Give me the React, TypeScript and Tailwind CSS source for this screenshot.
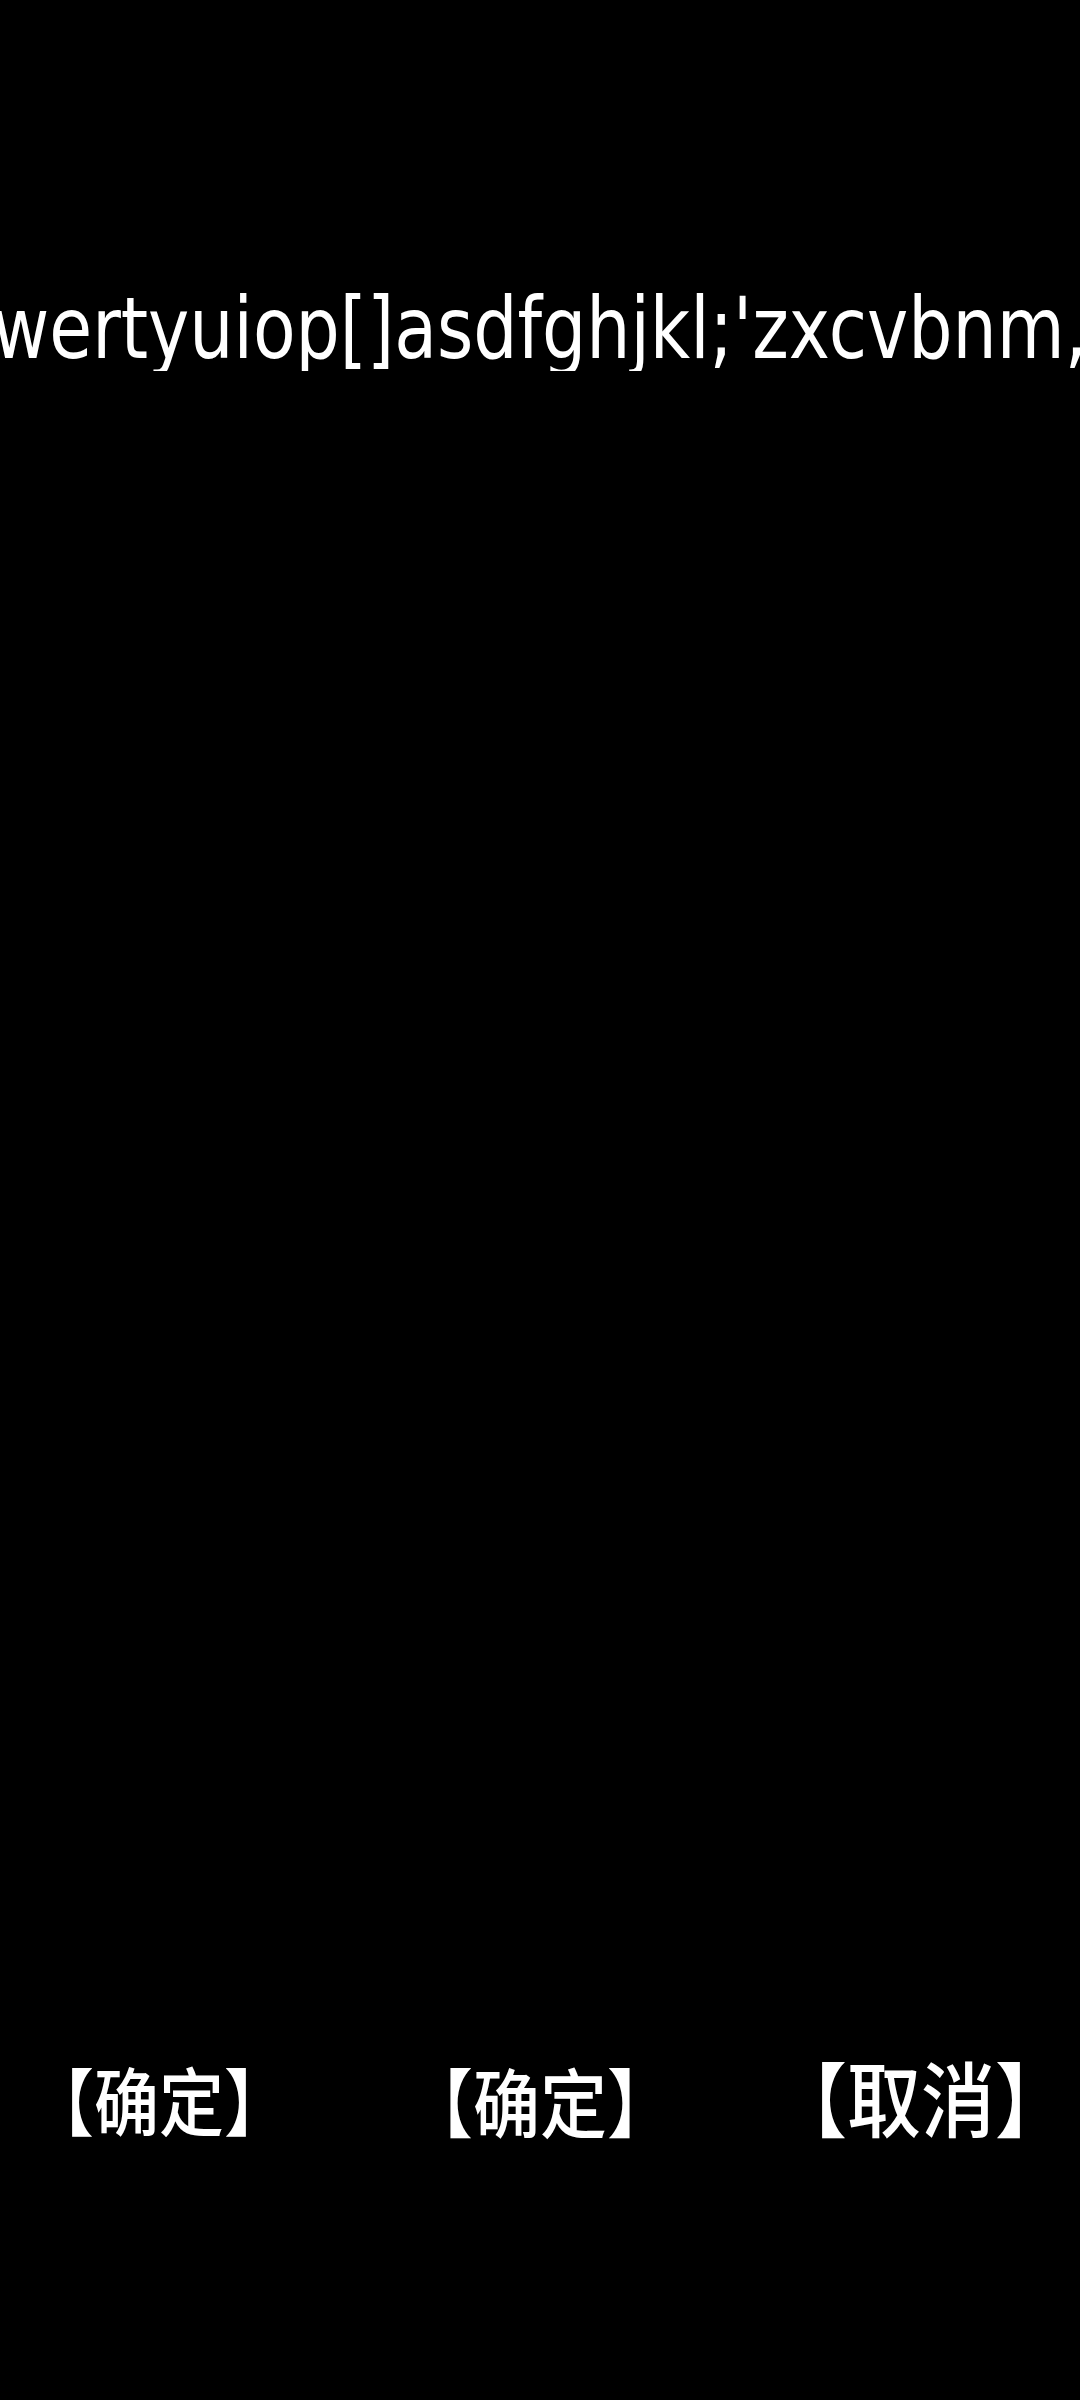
export default function App() {
  return (
    <div className="w-[1080px] h-[2400px] bg-black text-white overflow-hidden flex flex-col">
      {/* keyboard row text, overflows both sides */}
      <div className="mt-[286px] flex justify-center overflow-hidden">
        <div className="whitespace-nowrap leading-none text-[85px] font-['DejaVu_Sans',sans-serif] scale-x-[0.82] shrink-0">
          qwertyuiop[]asdfghjkl;'zxcvbnm,./
        </div>
      </div>

      {/* buttons */}
      <div className="mt-auto mb-[264px] flex items-end pl-[29px] font-['Noto_Sans_CJK_SC',sans-serif] font-medium leading-none">
        <span className="text-[65px] scale-y-[1.13] origin-bottom">【确定】</span>
        <span className="ml-[117px] text-[67px] scale-y-[1.12] origin-bottom">【确定】</span>
        <span className="ml-[99px] text-[74px] scale-y-[1.1] origin-bottom">【取消】</span>
      </div>
    </div>
  );
}
